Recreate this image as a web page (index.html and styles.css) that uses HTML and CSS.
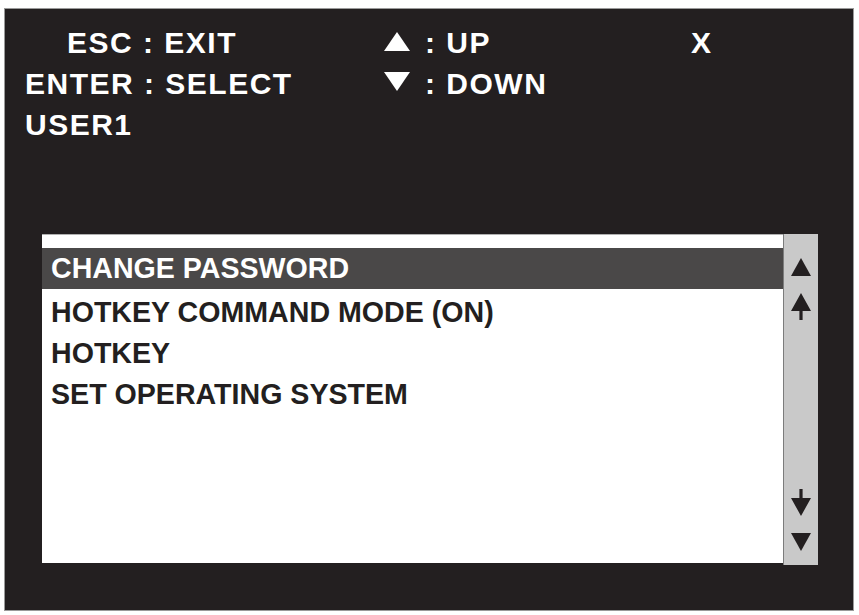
FILE: index.html
```html
<!DOCTYPE html>
<html lang="en">
<head>
  <meta charset="UTF-8">
  <title>OSD - USER1</title>
  <link rel="stylesheet" href="styles.css">
</head>
<body>
  <div class="osd">
    <div class="keys">
      <div class="key esc">ESC : EXIT</div>
      <div class="key">
        <svg class="tri up" viewBox="0 0 26 19"><polygon points="13,0 26,19 0,19"/></svg>: UP
      </div>
      <div class="key close">X</div>

      <div class="key">ENTER : SELECT</div>
      <div class="key">
        <svg class="tri down" viewBox="0 0 26 19"><polygon points="0,0 26,0 13,19"/></svg>: DOWN
      </div>
      <div></div>

      <div class="key">USER1</div>
    </div>

    <div class="box">
      <div class="list">
        <div class="item active">CHANGE PASSWORD</div>
        <div class="item">HOTKEY COMMAND MODE (ON)</div>
        <div class="item">HOTKEY</div>
        <div class="item">SET OPERATING SYSTEM</div>
      </div>
      <div class="scroll">
        <svg class="sicon" viewBox="0 0 20 18"><polygon points="10,0 20,18 0,18"/></svg>
        <svg class="sarrow" viewBox="0 0 20 27"><polygon points="10,0 20,18 11.6,18 11.6,27 8.4,27 8.4,18 0,18"/></svg>
        <div class="spacer"></div>
        <svg class="sarrow" viewBox="0 0 20 27"><polygon points="8.4,0 11.6,0 11.6,9 20,9 10,27 0,9 8.4,9"/></svg>
        <svg class="sicon last" viewBox="0 0 20 18"><polygon points="0,0 20,0 10,18"/></svg>
      </div>
    </div>
  </div>
</body>
</html>
```

FILE: styles.css
```css
body {
  margin: 0;
  background: #fff;
  font-family: 'Liberation Sans', Arial, sans-serif;
  font-weight: bold;
}

.osd {
  margin: 9px 6px 5px 5px;
  height: 601px;
  background: #231f20;
  box-shadow: 0 0 0 1px #9a9a9a;
  color: #fff;
  padding-top: 13px;
  box-sizing: border-box;
}

.keys {
  display: grid;
  grid-template-columns: 359px 307px auto;
  grid-auto-rows: 41px;
  padding-left: 20px;
  font-size: 30px;
  letter-spacing: 1.5px;
}

.key {
  display: flex;
  align-items: center;
  white-space: nowrap;
}

.key.esc {
  padding-left: 42px;
}

.tri {
  width: 26px;
  height: 19px;
  fill: #fff;
  margin-right: 15px;
}

.tri.up {
  margin-top: -3px;
}

.tri.down {
  margin-top: -4px;
}

.box {
  display: flex;
  margin: 89px 35px 0 37px;
  height: 329px;
}

.list {
  flex: 1;
  background: #fff;
  border-top: 1px solid #b0b0b0;
  padding-top: 13px;
  color: #231f20;
  font-size: 28.6px;
}

.item {
  height: 41px;
  line-height: 41px;
  padding-left: 9px;
  white-space: nowrap;
}

.item.active {
  background: #4a4848;
  color: #fff;
  margin-bottom: 3px;
}

.scroll {
  width: 34px;
  background: #c9c9c9;
  border-left: 1px solid #7c7c7c;
  display: flex;
  flex-direction: column;
  align-items: center;
  padding-top: 24px;
  padding-bottom: 14px;
  margin-bottom: -2px;
}

.sicon {
  width: 20px;
  height: 18px;
  fill: #231f20;
  flex-shrink: 0;
}

.sarrow {
  width: 20px;
  height: 27px;
  fill: #231f20;
  margin-top: 17px;
  flex-shrink: 0;
}

.spacer {
  flex: 1;
}

.sicon.last {
  margin-top: 17px;
}

.spacer + .sarrow {
  margin-top: 0;
}
```
